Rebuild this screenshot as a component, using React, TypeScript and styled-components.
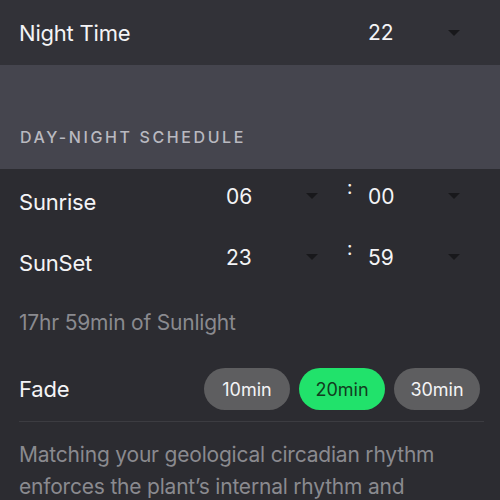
import styled, { createGlobalStyle } from 'styled-components';

const colors = {
  top: '#323238',
  header: '#45454e',
  body: '#2c2c31',
  white: '#f4f4f6',
  grey: '#8a8a8f',
  title: '#b9b9c0',
  pill: '#5e5e60',
  green: '#21e26b',
  arrow: '#18181b',
  divider: '#3c3c41',
};

const GlobalStyle = createGlobalStyle`
  html, body {
    margin: 0;
    padding: 0;
    background: ${colors.body};
    font-family: Inter, 'Liberation Sans', sans-serif;
    -webkit-font-smoothing: antialiased;
  }
`;

const Page = styled.div`
  width: 500px;
  height: 500px;
  overflow: hidden;
  background: ${colors.body};
`;

const TopBar = styled.div`
  background: ${colors.top};
  height: 65px;
  padding: 0 16px 0 19px;
  display: flex;
  align-items: center;
`;

const Header = styled.div`
  background: ${colors.header};
  height: 104px;
  padding: 0 20px 22px;
  box-sizing: border-box;
  display: flex;
  align-items: flex-end;
`;

const Title = styled.h2`
  margin: 0;
  font-size: 16px;
  font-weight: 500;
  letter-spacing: 2.6px;
  color: ${colors.title};
`;

const Body = styled.div`
  padding: 0 16px 0 19px;
`;

const TimeRow = styled.div<{ $height: number }>`
  display: grid;
  grid-template-columns: 207px 110px 32px 110px;
  align-items: center;
  height: ${(p) => p.$height}px;
  width: 100%;
`;

const Label = styled.span<{ $offset?: number }>`
  font-size: 22px;
  letter-spacing: -0.2px;
  color: ${colors.white};
  padding-top: ${(p) => p.$offset ?? 0}px;
`;

const Picker = styled.div<{ $lift?: number }>`
  position: relative;
  display: flex;
  align-items: center;
  height: 30px;
  margin-top: ${(p) => -(p.$lift ?? 0)}px;
`;

const Value = styled.span`
  font-size: 21px;
  color: ${colors.white};
`;

const Arrow = styled.span`
  position: absolute;
  left: 80px;
  top: 12px;
  width: 0;
  height: 0;
  border-left: 6px solid transparent;
  border-right: 6px solid transparent;
  border-top: 6px solid ${colors.arrow};
`;

const Colon = styled.span`
  font-size: 19px;
  color: ${colors.white};
  padding-left: 11px;
  margin-top: -26px;
`;

const Summary = styled.p`
  margin: 0;
  height: 62px;
  display: flex;
  align-items: center;
  font-size: 21px;
  letter-spacing: -0.2px;
  color: ${colors.grey};
`;

const FadeRow = styled.div`
  display: flex;
  align-items: center;
  justify-content: space-between;
  height: 64px;
  padding-top: 4px;
  border-bottom: 1px solid ${colors.divider};
`;

const Pills = styled.div`
  display: flex;
  gap: 9px;
  margin-right: 4px;
`;

const Pill = styled.button<{ $active?: boolean }>`
  width: 86px;
  height: 42px;
  border: none;
  border-radius: 21px;
  background: ${(p) => (p.$active ? colors.green : colors.pill)};
  color: ${(p) => (p.$active ? '#123d20' : colors.white)};
  font-family: inherit;
  font-size: 18px;
  padding: 0;
`;

const Paragraph = styled.p`
  margin: 17px 0 0;
  font-size: 21px;
  line-height: 32px;
  letter-spacing: -0.2px;
  color: ${colors.grey};
`;

const TimePicker = ({ value, lift }: { value: string; lift?: number }) => (
  <Picker $lift={lift}>
    <Value>{value}</Value>
    <Arrow />
  </Picker>
);

const App = () => {
  return (
    <Page>
      <GlobalStyle />
      <TopBar>
        <TimeRow $height={65}>
          <Label>Night Time</Label>
          <span />
          <span />
          <TimePicker value='22' />
        </TimeRow>
      </TopBar>
      <Header>
        <Title>DAY-NIGHT SCHEDULE</Title>
      </Header>
      <Body>
        <TimeRow $height={62}>
          <Label $offset={4}>Sunrise</Label>
          <TimePicker value='06' lift={8} />
          <Colon>:</Colon>
          <TimePicker value='00' lift={8} />
        </TimeRow>
        <TimeRow $height={60}>
          <Label $offset={4}>SunSet</Label>
          <TimePicker value='23' lift={8} />
          <Colon>:</Colon>
          <TimePicker value='59' lift={8} />
        </TimeRow>
        <Summary>17hr 59min of Sunlight</Summary>
        <FadeRow>
          <Label>Fade</Label>
          <Pills>
            <Pill>10min</Pill>
            <Pill $active>20min</Pill>
            <Pill>30min</Pill>
          </Pills>
        </FadeRow>
        <Paragraph>
          Matching your geological circadian rhythm enforces the plant’s internal rhythm and
          improves growth.
        </Paragraph>
      </Body>
    </Page>
  );
};

export default App;
